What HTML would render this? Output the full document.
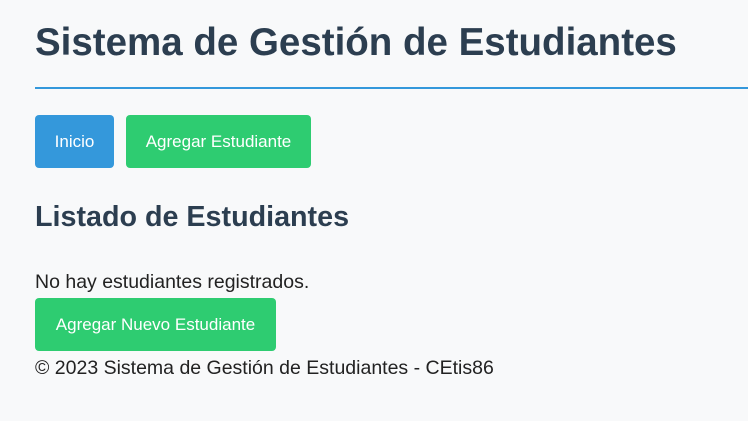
<!DOCTYPE html>
<html><head><meta charset="utf-8"><style>
*{margin:0;padding:0;box-sizing:border-box}
body{width:748px;height:421px;overflow:hidden;background:#f8f9fa;font-family:"Liberation Sans","DejaVu Sans",sans-serif;color:#2c3e50;position:relative}
.a{position:absolute;white-space:nowrap}
h1{position:absolute;left:35px;top:21px;font-size:38.5px;font-weight:bold;white-space:nowrap}
.line{position:absolute;left:35px;right:0;top:87px;height:2px;background:#3498db}
.btn{position:absolute;color:#fff;font-size:17px;border-radius:4px;display:flex;align-items:center;justify-content:center}
h2{position:absolute;left:35px;top:201px;font-size:28.7px;font-weight:bold;white-space:nowrap}
.t{font-size:19.5px;color:#222}
</style></head><body>
<h1>Sistema de Gestión de Estudiantes</h1>
<div class="line"></div>
<div class="btn" style="left:35px;top:115px;width:79px;height:53px;background:#3498db">Inicio</div>
<div class="btn" style="left:126px;top:115px;width:185px;height:53px;background:#2ecc71">Agregar Estudiante</div>
<h2>Listado de Estudiantes</h2>
<div class="a t" style="left:35px;top:271px">No hay estudiantes registrados.</div>
<div class="btn" style="left:35px;top:298px;width:241px;height:53px;background:#2ecc71">Agregar Nuevo Estudiante</div>
<div class="a t" style="left:35px;top:357px">© 2023 Sistema de Gestión de Estudiantes - CEtis86</div>
</body></html>
